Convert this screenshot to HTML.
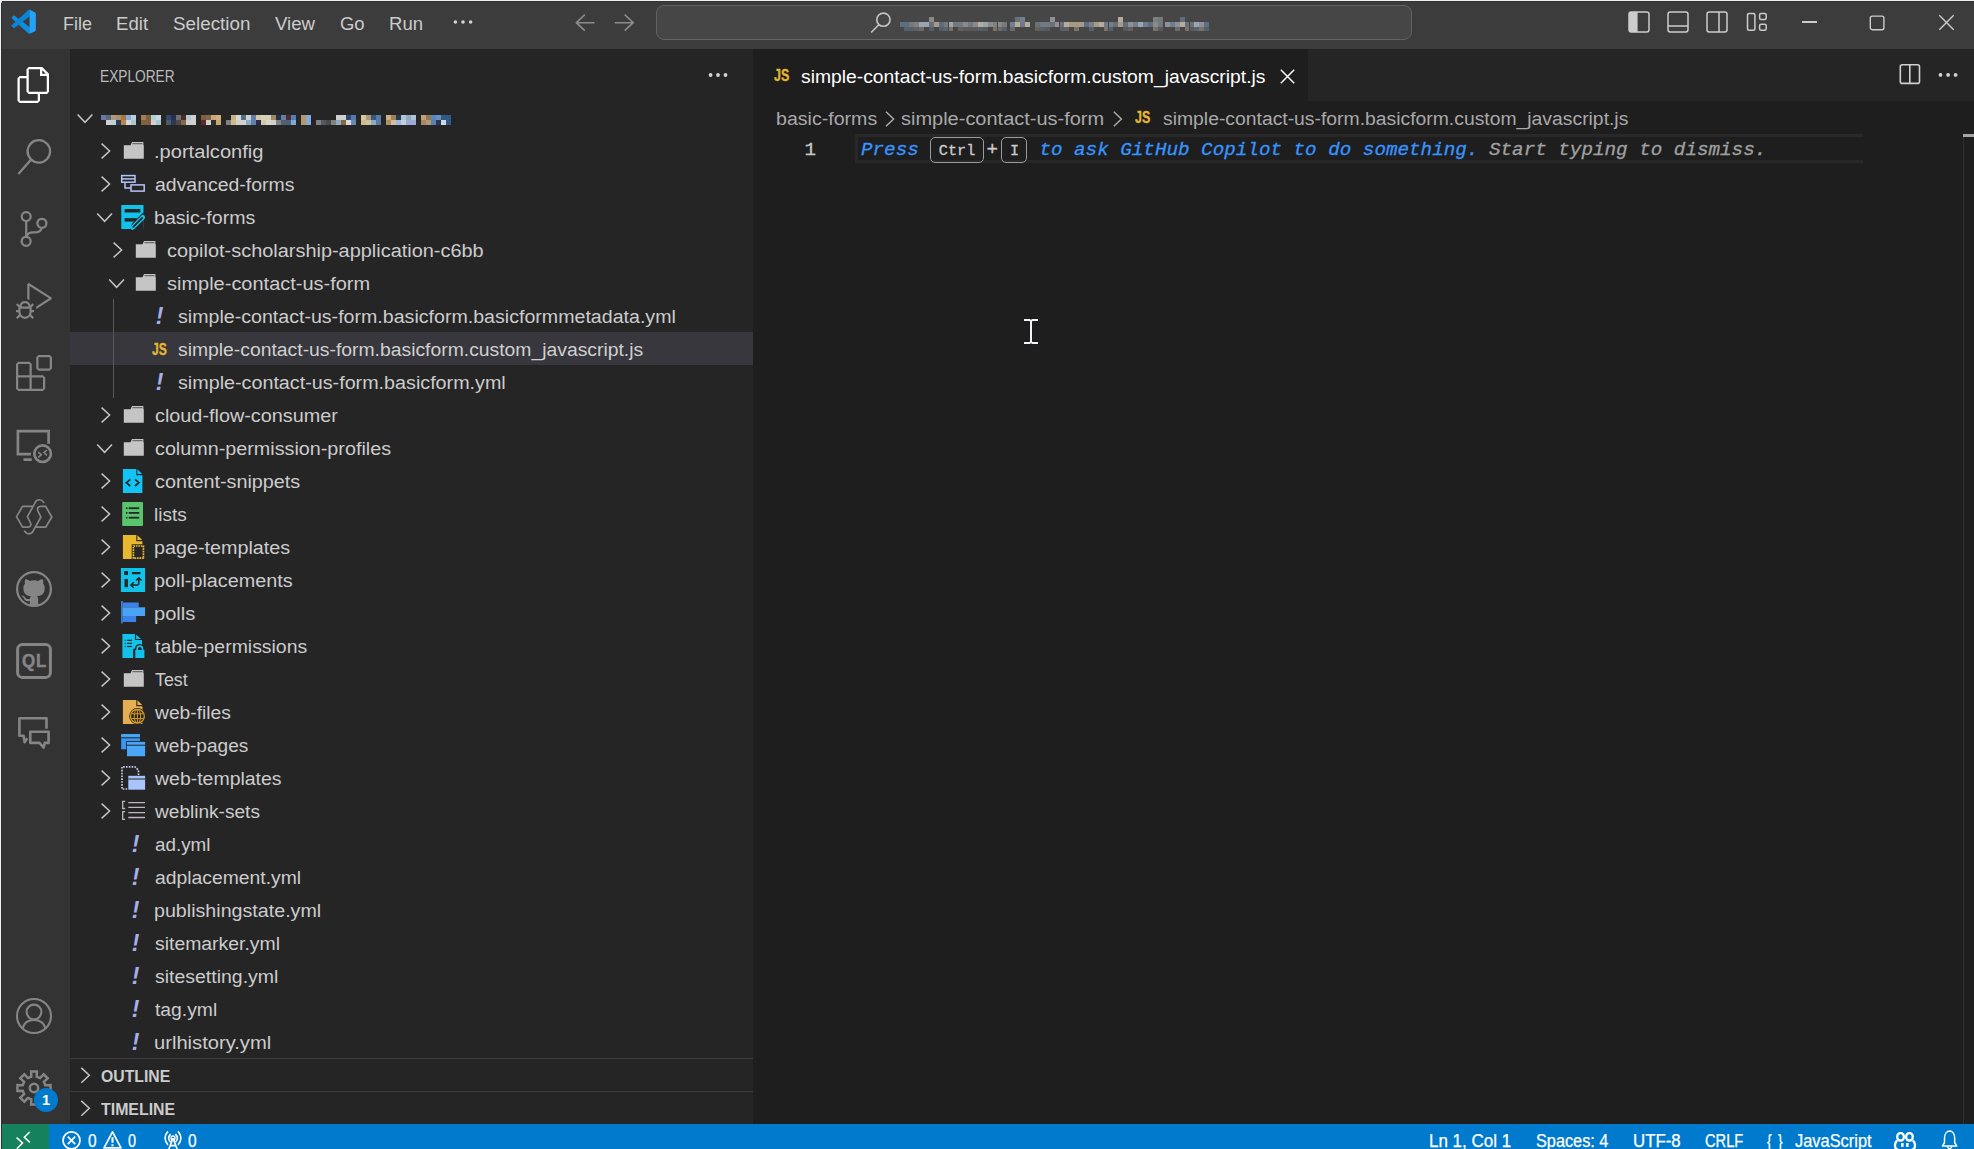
<!DOCTYPE html>
<html lang="en"><head><meta charset="utf-8"><title>Visual Studio Code</title>
<style>
html,body{margin:0;padding:0;background:#1e1e1e;overflow:hidden}
#root{position:relative;width:1974px;height:1149px;overflow:hidden;font-family:'Liberation Sans', sans-serif}
.t{position:absolute;white-space:pre;line-height:30px;height:30px;transform-origin:0 0}
svg{overflow:visible}
</style></head><body><div id="root">
<div style="position:absolute;left:0px;top:0px;width:1974px;height:1149px;background:#1e1e1e;"></div>
<div style="position:absolute;left:0px;top:0px;width:1974px;height:49px;background:#3c3c3c;"></div>
<div style="position:absolute;left:0px;top:49px;width:70px;height:1075px;background:#333333;"></div>
<div style="position:absolute;left:70px;top:49px;width:683px;height:1075px;background:#252526;"></div>
<div style="position:absolute;left:753px;top:49px;width:1221px;height:52px;background:#252526;"></div>
<div style="position:absolute;left:753px;top:49px;width:555px;height:52px;background:#1e1e1e;"></div>
<div style="position:absolute;left:0px;top:1124px;width:1974px;height:25px;background:#007acc;"></div>
<div style="position:absolute;left:0px;top:1124px;width:49px;height:25px;background:#16825d;"></div>
<div style="position:absolute;left:1px;top:1px;width:1974px;height:1px;background:#323232;"></div>
<div style="position:absolute;left:1px;top:1px;width:1px;height:1149px;background:#323232;"></div>
<div style="position:absolute;left:0px;top:0px;width:1974px;height:1px;background:#eff0f4;"></div>
<div style="position:absolute;left:0px;top:0px;width:1px;height:1149px;background:#eff0f4;"></div>
<div style="position:absolute;left:1px;top:1px;width:1px;height:1px;background:#e0e2e8;"></div>
<div style="position:absolute;left:1px;top:2px;width:1px;height:1px;background:#8fa6c0;"></div>
<svg style="position:absolute;left:11px;top:9px" width="26" height="26" viewBox="-2.9167 -3.3333 108.3333 108.3333" ><path fill="#0d8ee0" d="M96.46 10.8 75.86.87a6.23 6.23 0 0 0-7.1 1.21L29.35 38.04 12.19 25.01a4.16 4.16 0 0 0-5.32.24L1.37 30.26a4.17 4.17 0 0 0 0 6.16L16.25 50 1.37 63.58a4.17 4.17 0 0 0 0 6.16l5.5 5.01a4.16 4.16 0 0 0 5.32.24l17.16-13.03 39.41 35.96a6.22 6.22 0 0 0 7.1 1.21l20.6-9.91A6.25 6.25 0 0 0 100 83.59V16.41a6.25 6.25 0 0 0-3.54-5.63zM75.02 72.7 45.11 50l29.91-22.7z"/><path fill="#0a7bcc" d="M1.37 69.74l5.5 5.01a4.16 4.16 0 0 0 5.32.24L75 27.3 75 1 68.76 2.08 1.37 63.58a4.17 4.17 0 0 0 0 6.16z" opacity=".55"/><path fill="#25a2f6" d="M75 .6v98.8c.3-.08.6-.2.86-.33l20.6-9.91A6.25 6.25 0 0 0 100 83.59V16.41a6.25 6.25 0 0 0-3.54-5.63L75.86.87A6 6 0 0 0 75 .6z"/></svg>
<span id="menu0" class="t" style="left:62.58px;top:8.95px;font-size:19.2px;color:#cccccc;font-weight:normal;font-style:normal;font-family:'Liberation Sans', sans-serif;transform:scaleX(0.9362);">File</span>
<span id="menu1" class="t" style="left:116.10px;top:8.95px;font-size:19.2px;color:#cccccc;font-weight:normal;font-style:normal;font-family:'Liberation Sans', sans-serif;transform:scaleX(0.9696);">Edit</span>
<span id="menu2" class="t" style="left:173.00px;top:8.95px;font-size:19.2px;color:#cccccc;font-weight:normal;font-style:normal;font-family:'Liberation Sans', sans-serif;transform:scaleX(0.9804);">Selection</span>
<span id="menu3" class="t" style="left:275.48px;top:8.95px;font-size:19.2px;color:#cccccc;font-weight:normal;font-style:normal;font-family:'Liberation Sans', sans-serif;transform:scaleX(0.9717);">View</span>
<span id="menu4" class="t" style="left:340.00px;top:8.95px;font-size:19.2px;color:#cccccc;font-weight:normal;font-style:normal;font-family:'Liberation Sans', sans-serif;transform:scaleX(0.9623);">Go</span>
<span id="menu5" class="t" style="left:388.58px;top:8.95px;font-size:19.2px;color:#cccccc;font-weight:normal;font-style:normal;font-family:'Liberation Sans', sans-serif;transform:scaleX(0.9655);">Run</span>
<svg style="position:absolute;left:451px;top:18px" width="25" height="9" viewBox="-0.4000 0.0000 25.0000 9.0000" ><circle cx="4.00" cy="4" r="1.8" fill="#d4d4d4"/><circle cx="11.60" cy="4" r="1.8" fill="#d4d4d4"/><circle cx="19.20" cy="4" r="1.8" fill="#d4d4d4"/></svg>
<svg style="position:absolute;left:575px;top:11px" width="21" height="24" viewBox="0.0000 -0.7000 21.0000 24.0000" ><path d="M9.8 3 L1.3 11 L9.8 19 M1.3 11 H19.5" fill="none" stroke="#8c8c8c" stroke-width="1.6"/></svg>
<svg style="position:absolute;left:614px;top:11px" width="22" height="24" viewBox="-0.5000 -0.7000 22.0000 24.0000" ><path d="M10.2 3 L18.7 11 L10.2 19 M18.7 11 H0.3" fill="none" stroke="#8c8c8c" stroke-width="1.6"/></svg>
<div style="position:absolute;left:656px;top:5px;width:756px;height:35px;background:#464646;border:1px solid #626262;border-radius:8px;box-sizing:border-box"></div>
<svg style="position:absolute;left:870px;top:11px" width="23" height="24" viewBox="0.0000 -0.5000 23.0000 24.0000" ><circle cx="13.4" cy="8.2" r="6.6" fill="none" stroke="#c4c4c4" stroke-width="1.6"/><path d="M9 13 L1.2 21" stroke="#c4c4c4" stroke-width="1.6" fill="none"/></svg>
<div style="position:absolute;left:899.5px;top:22.3px;width:4.9px;height:4.9px;background:#5f6d80;"></div>
<div style="position:absolute;left:904.4px;top:22.3px;width:4.9px;height:4.9px;background:#5f6d80;"></div>
<div style="position:absolute;left:904.4px;top:27.2px;width:4.9px;height:3.9px;background:#54606c;"></div>
<div style="position:absolute;left:909.3px;top:22.3px;width:4.9px;height:4.9px;background:#787878;"></div>
<div style="position:absolute;left:909.3px;top:27.2px;width:4.9px;height:3.9px;background:#54606c;"></div>
<div style="position:absolute;left:914.2px;top:22.3px;width:4.9px;height:4.9px;background:#7d7f84;"></div>
<div style="position:absolute;left:914.2px;top:27.2px;width:4.9px;height:3.9px;background:#66605a;"></div>
<div style="position:absolute;left:919.1px;top:22.3px;width:4.9px;height:4.9px;background:#9aa4b0;"></div>
<div style="position:absolute;left:919.1px;top:27.2px;width:4.9px;height:3.9px;background:#6a6a6a;"></div>
<div style="position:absolute;left:924.0px;top:22.3px;width:4.9px;height:4.9px;background:#9aa4b0;"></div>
<div style="position:absolute;left:928.9px;top:22.3px;width:4.9px;height:4.9px;background:#6a7078;"></div>
<div style="position:absolute;left:928.9px;top:27.2px;width:4.9px;height:3.9px;background:#54606c;"></div>
<div style="position:absolute;left:928.9px;top:17.4px;width:4.9px;height:4.9px;background:#8a8a88;"></div>
<div style="position:absolute;left:933.8px;top:22.3px;width:4.9px;height:4.9px;background:#a59a86;"></div>
<div style="position:absolute;left:938.7px;top:22.3px;width:4.9px;height:4.9px;background:#5f6d80;"></div>
<div style="position:absolute;left:938.7px;top:27.2px;width:4.9px;height:3.9px;background:#54606c;"></div>
<div style="position:absolute;left:943.6px;top:22.3px;width:4.9px;height:4.9px;background:#787878;"></div>
<div style="position:absolute;left:943.6px;top:27.2px;width:4.9px;height:3.9px;background:#596472;"></div>
<div style="position:absolute;left:948.5px;top:22.3px;width:4.9px;height:4.9px;background:#9aa4b0;"></div>
<div style="position:absolute;left:948.5px;top:27.2px;width:4.9px;height:3.9px;background:#7a7266;"></div>
<div style="position:absolute;left:953.4px;top:22.3px;width:4.9px;height:4.9px;background:#787878;"></div>
<div style="position:absolute;left:958.3px;top:22.3px;width:4.9px;height:4.9px;background:#707a86;"></div>
<div style="position:absolute;left:958.3px;top:27.2px;width:4.9px;height:3.9px;background:#66605a;"></div>
<div style="position:absolute;left:963.2px;top:22.3px;width:4.9px;height:4.9px;background:#8a8a88;"></div>
<div style="position:absolute;left:963.2px;top:27.2px;width:4.9px;height:3.9px;background:#5a5a5c;"></div>
<div style="position:absolute;left:968.1px;top:22.3px;width:4.9px;height:4.9px;background:#707a86;"></div>
<div style="position:absolute;left:968.1px;top:27.2px;width:4.9px;height:3.9px;background:#5a5a5c;"></div>
<div style="position:absolute;left:973.0px;top:22.3px;width:4.9px;height:4.9px;background:#8a8a88;"></div>
<div style="position:absolute;left:973.0px;top:27.2px;width:4.9px;height:3.9px;background:#5a5a5c;"></div>
<div style="position:absolute;left:977.9px;top:22.3px;width:4.9px;height:4.9px;background:#b5ad9c;"></div>
<div style="position:absolute;left:977.9px;top:27.2px;width:4.9px;height:3.9px;background:#54606c;"></div>
<div style="position:absolute;left:982.8px;top:22.3px;width:4.9px;height:4.9px;background:#9aa4b0;"></div>
<div style="position:absolute;left:982.8px;top:27.2px;width:4.9px;height:3.9px;background:#5a5a5c;"></div>
<div style="position:absolute;left:987.7px;top:22.3px;width:4.9px;height:4.9px;background:#8a8a88;"></div>
<div style="position:absolute;left:992.6px;top:22.3px;width:4.9px;height:4.9px;background:#7d7f84;"></div>
<div style="position:absolute;left:992.6px;top:27.2px;width:4.9px;height:3.9px;background:#7a7266;"></div>
<div style="position:absolute;left:997.5px;top:22.3px;width:4.9px;height:4.9px;background:#8a8a88;"></div>
<div style="position:absolute;left:997.5px;top:27.2px;width:4.9px;height:3.9px;background:#6a6a6a;"></div>
<div style="position:absolute;left:1002.4px;top:22.3px;width:4.9px;height:4.9px;background:#787878;"></div>
<div style="position:absolute;left:1002.4px;top:27.2px;width:4.9px;height:3.9px;background:#54606c;"></div>
<div style="position:absolute;left:1010px;top:22.3px;width:4.9px;height:4.9px;background:#6f7f92;"></div>
<div style="position:absolute;left:1010px;top:27.2px;width:4.9px;height:3.9px;background:#6a6a6a;"></div>
<div style="position:absolute;left:1014.9px;top:22.3px;width:4.9px;height:4.9px;background:#b5ad9c;"></div>
<div style="position:absolute;left:1014.9px;top:17.4px;width:4.9px;height:4.9px;background:#6a7078;"></div>
<div style="position:absolute;left:1019.8px;top:22.3px;width:4.9px;height:4.9px;background:#707a86;"></div>
<div style="position:absolute;left:1019.8px;top:17.4px;width:4.9px;height:4.9px;background:#6f7f92;"></div>
<div style="position:absolute;left:1024.7px;top:22.3px;width:4.9px;height:4.9px;background:#b5ad9c;"></div>
<div style="position:absolute;left:1035px;top:22.3px;width:4.9px;height:4.9px;background:#6a7078;"></div>
<div style="position:absolute;left:1035px;top:27.2px;width:4.9px;height:3.9px;background:#66605a;"></div>
<div style="position:absolute;left:1039.9px;top:22.3px;width:4.9px;height:4.9px;background:#707a86;"></div>
<div style="position:absolute;left:1039.9px;top:27.2px;width:4.9px;height:3.9px;background:#54606c;"></div>
<div style="position:absolute;left:1044.8px;top:22.3px;width:4.9px;height:4.9px;background:#707a86;"></div>
<div style="position:absolute;left:1044.8px;top:27.2px;width:4.9px;height:3.9px;background:#5a5a5c;"></div>
<div style="position:absolute;left:1049.7px;top:22.3px;width:4.9px;height:4.9px;background:#6a7078;"></div>
<div style="position:absolute;left:1049.7px;top:17.4px;width:4.9px;height:4.9px;background:#8f8f95;"></div>
<div style="position:absolute;left:1054.6px;top:22.3px;width:4.9px;height:4.9px;background:#8f8f95;"></div>
<div style="position:absolute;left:1059.5px;top:22.3px;width:4.9px;height:4.9px;background:#6a7078;"></div>
<div style="position:absolute;left:1059.5px;top:27.2px;width:4.9px;height:3.9px;background:#54606c;"></div>
<div style="position:absolute;left:1064.4px;top:22.3px;width:4.9px;height:4.9px;background:#b5ad9c;"></div>
<div style="position:absolute;left:1064.4px;top:27.2px;width:4.9px;height:3.9px;background:#66605a;"></div>
<div style="position:absolute;left:1069.3px;top:22.3px;width:4.9px;height:4.9px;background:#a59a86;"></div>
<div style="position:absolute;left:1074.2px;top:22.3px;width:4.9px;height:4.9px;background:#a59a86;"></div>
<div style="position:absolute;left:1074.2px;top:27.2px;width:4.9px;height:3.9px;background:#7a7266;"></div>
<div style="position:absolute;left:1079.1px;top:22.3px;width:4.9px;height:4.9px;background:#a59a86;"></div>
<div style="position:absolute;left:1084.0px;top:22.3px;width:4.9px;height:4.9px;background:#5f6d80;"></div>
<div style="position:absolute;left:1088.9px;top:22.3px;width:4.9px;height:4.9px;background:#7d7f84;"></div>
<div style="position:absolute;left:1088.9px;top:27.2px;width:4.9px;height:3.9px;background:#54606c;"></div>
<div style="position:absolute;left:1093.8px;top:22.3px;width:4.9px;height:4.9px;background:#a59a86;"></div>
<div style="position:absolute;left:1098.7px;top:22.3px;width:4.9px;height:4.9px;background:#b5ad9c;"></div>
<div style="position:absolute;left:1103.6px;top:22.3px;width:4.9px;height:4.9px;background:#707a86;"></div>
<div style="position:absolute;left:1103.6px;top:27.2px;width:4.9px;height:3.9px;background:#7a7266;"></div>
<div style="position:absolute;left:1108.5px;top:22.3px;width:4.9px;height:4.9px;background:#6f7f92;"></div>
<div style="position:absolute;left:1108.5px;top:27.2px;width:4.9px;height:3.9px;background:#54606c;"></div>
<div style="position:absolute;left:1113.4px;top:22.3px;width:4.9px;height:4.9px;background:#6a7078;"></div>
<div style="position:absolute;left:1118.3px;top:22.3px;width:4.9px;height:4.9px;background:#a59a86;"></div>
<div style="position:absolute;left:1118.3px;top:17.4px;width:4.9px;height:4.9px;background:#b5ad9c;"></div>
<div style="position:absolute;left:1123.2px;top:22.3px;width:4.9px;height:4.9px;background:#5f6d80;"></div>
<div style="position:absolute;left:1123.2px;top:27.2px;width:4.9px;height:3.9px;background:#5a5a5c;"></div>
<div style="position:absolute;left:1128.1px;top:22.3px;width:4.9px;height:4.9px;background:#8f8f95;"></div>
<div style="position:absolute;left:1128.1px;top:27.2px;width:4.9px;height:3.9px;background:#66605a;"></div>
<div style="position:absolute;left:1133.0px;top:22.3px;width:4.9px;height:4.9px;background:#6f7f92;"></div>
<div style="position:absolute;left:1137.9px;top:22.3px;width:4.9px;height:4.9px;background:#9aa4b0;"></div>
<div style="position:absolute;left:1142.8px;top:22.3px;width:4.9px;height:4.9px;background:#6f7f92;"></div>
<div style="position:absolute;left:1148px;top:22.3px;width:4.9px;height:4.9px;background:#5f6d80;"></div>
<div style="position:absolute;left:1152.9px;top:22.3px;width:4.9px;height:4.9px;background:#8a8a88;"></div>
<div style="position:absolute;left:1152.9px;top:27.2px;width:4.9px;height:3.9px;background:#7a7266;"></div>
<div style="position:absolute;left:1152.9px;top:17.4px;width:4.9px;height:4.9px;background:#7d7f84;"></div>
<div style="position:absolute;left:1157.8px;top:22.3px;width:4.9px;height:4.9px;background:#707a86;"></div>
<div style="position:absolute;left:1157.8px;top:27.2px;width:4.9px;height:3.9px;background:#5a5a5c;"></div>
<div style="position:absolute;left:1157.8px;top:17.4px;width:4.9px;height:4.9px;background:#787878;"></div>
<div style="position:absolute;left:1165px;top:22.3px;width:4.9px;height:4.9px;background:#8f8f95;"></div>
<div style="position:absolute;left:1169.9px;top:22.3px;width:4.9px;height:4.9px;background:#6f7f92;"></div>
<div style="position:absolute;left:1174.8px;top:22.3px;width:4.9px;height:4.9px;background:#8f8f95;"></div>
<div style="position:absolute;left:1174.8px;top:27.2px;width:4.9px;height:3.9px;background:#6a6a6a;"></div>
<div style="position:absolute;left:1179.7px;top:22.3px;width:4.9px;height:4.9px;background:#b5ad9c;"></div>
<div style="position:absolute;left:1179.7px;top:17.4px;width:4.9px;height:4.9px;background:#5f6d80;"></div>
<div style="position:absolute;left:1184.6px;top:22.3px;width:4.9px;height:4.9px;background:#6a7078;"></div>
<div style="position:absolute;left:1184.6px;top:27.2px;width:4.9px;height:3.9px;background:#7a7266;"></div>
<div style="position:absolute;left:1189.5px;top:22.3px;width:4.9px;height:4.9px;background:#6a7078;"></div>
<div style="position:absolute;left:1189.5px;top:27.2px;width:4.9px;height:3.9px;background:#5a5a5c;"></div>
<div style="position:absolute;left:1194.4px;top:22.3px;width:4.9px;height:4.9px;background:#9aa4b0;"></div>
<div style="position:absolute;left:1194.4px;top:27.2px;width:4.9px;height:3.9px;background:#596472;"></div>
<div style="position:absolute;left:1199.3px;top:22.3px;width:4.9px;height:4.9px;background:#8f8f95;"></div>
<div style="position:absolute;left:1199.3px;top:27.2px;width:4.9px;height:3.9px;background:#7a7266;"></div>
<div style="position:absolute;left:1204.2px;top:22.3px;width:4.9px;height:4.9px;background:#5f6d80;"></div>
<div style="position:absolute;left:1204.2px;top:27.2px;width:4.9px;height:3.9px;background:#54606c;"></div>
<svg style="position:absolute;left:1628px;top:11px" width="23" height="23" viewBox="0.0000 0.0000 23.0000 23.0000" ><rect x="1" y="1" width="20" height="20" rx="2.2" fill="none" stroke="#cccccc" stroke-width="1.5"/><path d="M1 3 a2 2 0 0 1 2 -2 H9.6 V21 H3 a2 2 0 0 1 -2 -2 Z" fill="#cccccc"/></svg>
<svg style="position:absolute;left:1667px;top:11px" width="23" height="23" viewBox="0.0000 0.0000 23.0000 23.0000" ><rect x="1" y="1" width="20" height="20" rx="2.2" fill="none" stroke="#cccccc" stroke-width="1.5"/><path d="M1 15 H21" stroke="#cccccc" stroke-width="1.5"/></svg>
<svg style="position:absolute;left:1706px;top:11px" width="23" height="23" viewBox="0.0000 0.0000 23.0000 23.0000" ><rect x="1" y="1" width="20" height="20" rx="2.2" fill="none" stroke="#cccccc" stroke-width="1.5"/><path d="M13 1 V21" stroke="#cccccc" stroke-width="1.5"/></svg>
<svg style="position:absolute;left:1746px;top:12px" width="23" height="21" viewBox="0.0000 0.0000 23.0000 21.0000" ><rect x="1.5" y="1.5" width="7.4" height="16.8" rx="1.5" fill="none" stroke="#cccccc" stroke-width="1.5"/><rect x="13.6" y="1.5" width="6.6" height="6" rx="1.5" fill="none" stroke="#cccccc" stroke-width="1.5"/><rect x="13.6" y="12.3" width="6.6" height="6" rx="1.5" fill="none" stroke="#cccccc" stroke-width="1.5"/></svg>
<div style="position:absolute;left:1802px;top:21.3px;width:15px;height:1.3px;background:#cccccc;"></div>
<svg style="position:absolute;left:1869px;top:15px" width="17" height="17" viewBox="0.0000 0.0000 17.0000 17.0000" ><rect x="1.3" y="1.1" width="13.6" height="13.6" rx="2" fill="none" stroke="#cccccc" stroke-width="1.4"/></svg>
<svg style="position:absolute;left:1939px;top:15px" width="16" height="16" viewBox="0.0000 0.0000 16.0000 16.0000" ><path d="M0.3 0.3 L14.7 14.7 M14.7 0.3 L0.3 14.7" stroke="#cccccc" stroke-width="1.4" fill="none"/></svg>
<svg style="position:absolute;left:16px;top:67px" width="37" height="37" viewBox="0.0000 0.0000 24.6667 24.6667" ><path fill="#ffffff" d="M17.5 0h-9L7 1.5V6H2.5L1 7.5v15.07L2.5 24h12.07L16 22.57V18h4.7l1.3-1.43V4.5L17.5 0zm0 2.12l2.38 2.38H17.5V2.12zm-3 20.38h-12v-15H7v9.07L8.5 18h6v4.5zm6-6h-12v-15H16V6h4.5v10.5z"/></svg>
<svg style="position:absolute;left:16px;top:139px" width="37" height="37" viewBox="0.0000 0.0000 24.6667 24.6667" ><path fill="#858585" d="M15.25 0a8.25 8.25 0 0 0-6.18 13.72L1 22.88l1.12 1 8.05-9.12A8.251 8.251 0 1 0 15.25.01V0zm0 15a6.75 6.75 0 1 1 0-13.5 6.75 6.75 0 0 1 0 13.5z"/></svg>
<svg style="position:absolute;left:16px;top:211px" width="37" height="37" viewBox="0.0000 0.0000 24.6667 24.6667" ><path fill="#858585" d="M21.007 8.222A3.738 3.738 0 0 0 15.045 5.2a3.737 3.737 0 0 0 1.156 6.583 2.988 2.988 0 0 1-2.668 1.67h-2.99a4.456 4.456 0 0 0-2.989 1.165V7.4a3.737 3.737 0 1 0-1.494 0v9.117a3.776 3.776 0 1 0 1.816.099 2.99 2.99 0 0 1 2.668-1.667h2.99a4.484 4.484 0 0 0 4.223-3.039 3.736 3.736 0 0 0 3.25-3.687zM4.565 3.738a2.242 2.242 0 1 1 4.484 0 2.242 2.242 0 0 1-4.484 0zm4.484 16.441a2.242 2.242 0 1 1-4.484 0 2.242 2.242 0 0 1 4.484 0zm8.221-9.715a2.242 2.242 0 1 1 0-4.485 2.242 2.242 0 0 1 0 4.485z"/></svg>
<svg style="position:absolute;left:16px;top:283px" width="37" height="37" viewBox="0.0000 0.0000 24.6667 24.6667" ><path fill="#858585" d="M10.94 13.5l-1.32 1.32a3.73 3.73 0 0 0-7.24 0L1.06 13.5 0 14.56l1.72 1.72-.22.22V18H0v1.5h1.5v.08c.077.489.214.966.41 1.42L0 22.94 1.06 24l1.65-1.65A4.308 4.308 0 0 0 6 24a4.31 4.31 0 0 0 3.29-1.65L10.94 24 12 22.94 10.09 21c.198-.464.336-.951.41-1.45v-.1H12V18h-1.5v-1.5l-.22-.22L12 14.56l-1.06-1.06zM6 13.5a2.25 2.25 0 0 1 2.25 2.25h-4.5A2.25 2.25 0 0 1 6 13.5zm3 6a3.33 3.33 0 0 1-3 3 3.33 3.33 0 0 1-3-3v-2.25h6v2.25zm14.76-9.9v1.26L13.5 17.37V15.6l8.5-5.37L9 2v9.46a5.07 5.07 0 0 0-1.5-.72V.63L8.64 0l15.12 9.6z"/></svg>
<svg style="position:absolute;left:16px;top:355px" width="37" height="37" viewBox="0.0000 0.0000 24.6667 24.6667" ><path fill="#858585" d="M13.5 1.5L15 0h7.5L24 1.5V9l-1.5 1.5H15L13.5 9V1.5zm1.5 0V9h7.5V1.5H15zM0 15V6l1.5-1.5H9L10.5 6v7.5H18l1.5 1.5v7.5L18 24H1.5L0 22.5V15zm9-1.5V6H1.5v7.5H9zM9 15H1.5v7.5H9V15zm1.5 7.5H18V15h-7.5v7.5z"/></svg>
<svg style="position:absolute;left:16px;top:427px" width="37" height="37" viewBox="0.0000 0.0000 37.0000 37.0000" ><path d="M15.800 32.600 H7.500 M15 27.200 H1.900 V4.200 H32.600 V16.700" fill="none" stroke="#858585" stroke-width="2.700"/><circle cx="26.600" cy="26.700" r="8.300" fill="none" stroke="#858585" stroke-width="2.700"/><path d="M22.300 25.200 L25.300 27.800 L22.300 30.400 M31 23 L27.900 25.600 L31 28.300" fill="none" stroke="#858585" stroke-width="1.600"/></svg>
<svg style="position:absolute;left:16px;top:499px" width="37" height="37" viewBox="0.0000 0.0000 37.0000 37.0000" ><g fill="none" stroke="#858585" stroke-width="1.7" stroke-linejoin="round" stroke-linecap="round"><path d="M27.7 3.4 C25.5 0 20.5 -0.5 18.8 4.3 L11.4 17.6 L14.3 23.5 C15.8 26.5 14 28.2 11.4 28.2 H6.6 L0.5 17.6 L6.6 7.4 H17.1"/><path d="M8.6 32.2 C10.8 35.6 15.8 36.1 17.5 31.3 L24.9 18 L22 12.1 C20.5 9.1 22.3 7.4 24.9 7.4 H29.7 L35.8 18 L29.7 28.2 H19.2"/></g></svg>
<svg style="position:absolute;left:16px;top:571px" width="37" height="37" viewBox="0.0000 0.0000 16.4444 16.4444" ><circle cx="8" cy="8" r="7.6" fill="#858585"/><path fill="#333333" transform="translate(8 8) scale(0.93) translate(-8 -8)" d="M8 0C3.58 0 0 3.58 0 8c0 3.54 2.29 6.53 5.47 7.59.4.07.55-.17.55-.38 0-.19-.01-.82-.01-1.49-2.01.37-2.53-.49-2.69-.94-.09-.23-.48-.94-.82-1.13-.28-.15-.68-.52-.01-.53.63-.01 1.08.58 1.23.82.72 1.21 1.87.87 2.33.66.07-.52.28-.87.51-1.07-1.78-.2-3.64-.89-3.64-3.950 0-.87.31-1.59.82-2.15-.08-.2-.36-1.02.08-2.12 0 0 .67-.21 2.2.82.64-.18 1.32-.27 2-.27.68 0 1.36.09 2 .27 1.53-1.04 2.2-.82 2.2-.82.44 1.1.16 1.92.08 2.12.51.56.82 1.27.82 2.15 0 3.07-1.87 3.750-3.650 3.950.29.25.54.73.54 1.48 0 1.07-.01 1.93-.01 2.2 0 .21.15.46.55.38A8.013 8.013 0 0016 8c0-4.42-3.58-8-8-8z"/><circle cx="8" cy="8" r="7.5" fill="none" stroke="#858585" stroke-width="1"/></svg>
<svg style="position:absolute;left:16px;top:643px" width="37" height="37" viewBox="0.0000 0.0000 37.0000 37.0000" ><rect x="1.600" y="1.600" width="32.800" height="32.800" rx="4.600" fill="none" stroke="#858585" stroke-width="3"/></svg>
<span class="t" style="left:21.500px;top:646.300px;font-size:19px;font-weight:bold;color:#858585;letter-spacing:0.900px;-webkit-text-stroke:0.500px #858585;transform:scaleX(0.890)">QL</span>
<svg style="position:absolute;left:16px;top:715px" width="37" height="37" viewBox="0.0000 0.0000 37.0000 37.0000" ><g fill="none" stroke="#858585" stroke-width="2.600" stroke-linejoin="round"><path d="M30.500 13.700 V3.200 H3.400 V20.800 H7.600 L8.600 27.300 L11.300 23.200"/><path d="M14.300 16.800 H32.600 V27.900 H28.800 L27.600 32.600 L23.500 27.900 H14.300 Z"/></g></svg>
<svg style="position:absolute;left:16px;top:998px" width="37" height="37" viewBox="0.0000 0.0000 37.0000 37.0000" ><circle cx="18" cy="18" r="17" fill="none" stroke="#858585" stroke-width="2.100"/><circle cx="18" cy="14" r="7.400" fill="none" stroke="#858585" stroke-width="2.100"/><path d="M6.500 30.500 C8 24.500 13 22 18 22 C23 22 28 24.500 29.500 30.500" fill="none" stroke="#858585" stroke-width="2.100"/></svg>
<svg style="position:absolute;left:16px;top:1070px" width="37" height="37" viewBox="0.0000 0.0000 37.0000 37.0000" ><path d="M15.11 1.45 L20.89 1.45 L20.71 6.72 L24.06 8.11 L27.66 4.26 L31.74 8.34 L27.89 11.94 L29.28 15.29 L34.55 15.11 L34.55 20.89 L29.28 20.71 L27.89 24.06 L31.74 27.66 L27.66 31.74 L24.06 27.89 L20.71 29.28 L20.89 34.55 L15.11 34.55 L15.29 29.28 L11.94 27.89 L8.34 31.74 L4.26 27.66 L8.11 24.06 L6.72 20.71 L1.45 20.89 L1.45 15.11 L6.72 15.29 L8.11 11.94 L4.26 8.34 L8.34 4.26 L11.94 8.11 L15.29 6.72 Z" fill="none" stroke="#858585" stroke-width="2.500" stroke-linejoin="miter"/><circle cx="18" cy="18" r="4.200" fill="none" stroke="#858585" stroke-width="2.500"/></svg>
<div style="position:absolute;left:34px;top:1088px;width:24px;height:24px;background:#007acc;border-radius:50%"></div>
<span class="t" style="left:34px;top:1085px;width:24px;text-align:center;font-size:14.500px;font-weight:bold;color:#fff">1</span>
<span id="explorer" class="t" style="left:100.02px;top:60.98px;font-size:16.5px;color:#bbbbbb;font-weight:normal;font-style:normal;font-family:'Liberation Sans', sans-serif;transform:scaleX(0.8306);">EXPLORER</span>
<svg style="position:absolute;left:706px;top:71px" width="25" height="9" viewBox="-0.6000 0.0000 25.0000 9.0000" ><circle cx="4.00" cy="4" r="1.9" fill="#d4d4d4"/><circle cx="11.40" cy="4" r="1.9" fill="#d4d4d4"/><circle cx="18.90" cy="4" r="1.9" fill="#d4d4d4"/></svg>
<div style="position:absolute;left:70px;top:332px;width:683px;height:33px;background:#37373d;"></div>
<div style="position:absolute;left:112.5px;top:299px;width:1px;height:99px;background:#585858;"></div>
<svg style="position:absolute;left:76px;top:112px" width="19" height="14" viewBox="0.0000 -0.5000 19.0000 14.0000" ><path d="M1.6 2 L9 9.800 L16.400 2" fill="none" stroke="#c5c5c5" stroke-width="1.5"/></svg>
<div style="position:absolute;left:100.6px;top:115px;width:5.01px;height:5px;background:#6a78a8;"></div>
<div style="position:absolute;left:105.61px;top:115px;width:5.01px;height:5px;background:#5a6a80;"></div>
<div style="position:absolute;left:110.62px;top:115px;width:5.01px;height:5px;background:#b09878;"></div>
<div style="position:absolute;left:115.63px;top:115px;width:5.01px;height:5px;background:#a89070;"></div>
<div style="position:absolute;left:120.64px;top:115px;width:5.01px;height:5px;background:#a07840;"></div>
<div style="position:absolute;left:125.65px;top:115px;width:5.01px;height:5px;background:#88a8d8;"></div>
<div style="position:absolute;left:130.66px;top:115px;width:5.01px;height:5px;background:#b8d0d8;"></div>
<div style="position:absolute;left:140.68px;top:115px;width:5.01px;height:5px;background:#a08050;"></div>
<div style="position:absolute;left:145.69px;top:115px;width:5.01px;height:5px;background:#806040;"></div>
<div style="position:absolute;left:150.7px;top:115px;width:5.01px;height:5px;background:#b0d0d8;"></div>
<div style="position:absolute;left:155.71px;top:115px;width:5.01px;height:5px;background:#c8d8e0;"></div>
<div style="position:absolute;left:165.73px;top:115px;width:5.01px;height:5px;background:#304870;"></div>
<div style="position:absolute;left:170.74px;top:115px;width:5.01px;height:5px;background:#283050;"></div>
<div style="position:absolute;left:175.75px;top:115px;width:5.01px;height:5px;background:#707070;"></div>
<div style="position:absolute;left:180.76px;top:115px;width:5.01px;height:5px;background:#502828;"></div>
<div style="position:absolute;left:185.77px;top:115px;width:5.01px;height:5px;background:#b0c8d0;"></div>
<div style="position:absolute;left:190.78px;top:115px;width:5.01px;height:5px;background:#d0d0d0;"></div>
<div style="position:absolute;left:200.8px;top:115px;width:5.01px;height:5px;background:#786040;"></div>
<div style="position:absolute;left:205.81px;top:115px;width:5.01px;height:5px;background:#806848;"></div>
<div style="position:absolute;left:210.82px;top:115px;width:5.01px;height:5px;background:#c8a870;"></div>
<div style="position:absolute;left:215.83px;top:115px;width:5.01px;height:5px;background:#d0b080;"></div>
<div style="position:absolute;left:230.86px;top:115px;width:5.01px;height:5px;background:#c8b088;"></div>
<div style="position:absolute;left:235.87px;top:115px;width:5.01px;height:5px;background:#d8d8d0;"></div>
<div style="position:absolute;left:240.88px;top:115px;width:5.01px;height:5px;background:#507088;"></div>
<div style="position:absolute;left:245.89px;top:115px;width:5.01px;height:5px;background:#d0d0d0;"></div>
<div style="position:absolute;left:250.9px;top:115px;width:5.01px;height:5px;background:#6080a8;"></div>
<div style="position:absolute;left:255.91px;top:115px;width:5.01px;height:5px;background:#d0c8a0;"></div>
<div style="position:absolute;left:260.92px;top:115px;width:5.01px;height:5px;background:#d8d0b0;"></div>
<div style="position:absolute;left:265.93px;top:115px;width:5.01px;height:5px;background:#d0d0c0;"></div>
<div style="position:absolute;left:270.94px;top:115px;width:5.01px;height:5px;background:#a08860;"></div>
<div style="position:absolute;left:275.95px;top:115px;width:5.01px;height:5px;background:#283048;"></div>
<div style="position:absolute;left:280.96px;top:115px;width:5.01px;height:5px;background:#6080a8;"></div>
<div style="position:absolute;left:285.97px;top:115px;width:5.01px;height:5px;background:#502828;"></div>
<div style="position:absolute;left:290.98px;top:115px;width:5.01px;height:5px;background:#5080b8;"></div>
<div style="position:absolute;left:301.0px;top:115px;width:5.01px;height:5px;background:#b09870;"></div>
<div style="position:absolute;left:306.01px;top:115px;width:5.01px;height:5px;background:#88a8d8;"></div>
<div style="position:absolute;left:336.07px;top:115px;width:5.01px;height:5px;background:#d0d0d0;"></div>
<div style="position:absolute;left:341.08px;top:115px;width:5.01px;height:5px;background:#d0d0d0;"></div>
<div style="position:absolute;left:346.09px;top:115px;width:5.01px;height:5px;background:#304878;"></div>
<div style="position:absolute;left:351.1px;top:115px;width:5.01px;height:5px;background:#5878b0;"></div>
<div style="position:absolute;left:361.12px;top:115px;width:5.01px;height:5px;background:#d0c8a0;"></div>
<div style="position:absolute;left:366.13px;top:115px;width:5.01px;height:5px;background:#b09870;"></div>
<div style="position:absolute;left:371.14px;top:115px;width:5.01px;height:5px;background:#305888;"></div>
<div style="position:absolute;left:376.15px;top:115px;width:5.01px;height:5px;background:#5878a8;"></div>
<div style="position:absolute;left:386.17px;top:115px;width:5.01px;height:5px;background:#c8b088;"></div>
<div style="position:absolute;left:391.18px;top:115px;width:5.01px;height:5px;background:#a08050;"></div>
<div style="position:absolute;left:396.19px;top:115px;width:5.01px;height:5px;background:#283850;"></div>
<div style="position:absolute;left:401.2px;top:115px;width:5.01px;height:5px;background:#a8c8d0;"></div>
<div style="position:absolute;left:406.21px;top:115px;width:5.01px;height:5px;background:#90a8c0;"></div>
<div style="position:absolute;left:411.22px;top:115px;width:5.01px;height:5px;background:#a8c8d0;"></div>
<div style="position:absolute;left:421.24px;top:115px;width:5.01px;height:5px;background:#c0a070;"></div>
<div style="position:absolute;left:426.25px;top:115px;width:5.01px;height:5px;background:#907850;"></div>
<div style="position:absolute;left:431.26px;top:115px;width:5.01px;height:5px;background:#5888c0;"></div>
<div style="position:absolute;left:436.27px;top:115px;width:5.01px;height:5px;background:#6890c0;"></div>
<div style="position:absolute;left:441.28px;top:115px;width:5.01px;height:5px;background:#305888;"></div>
<div style="position:absolute;left:446.29px;top:115px;width:5.01px;height:5px;background:#305888;"></div>
<div style="position:absolute;left:105.61px;top:120px;width:5.01px;height:5px;background:#d0d0d0;"></div>
<div style="position:absolute;left:110.62px;top:120px;width:5.01px;height:5px;background:#b8d0d8;"></div>
<div style="position:absolute;left:115.63px;top:120px;width:5.01px;height:5px;background:#303a50;"></div>
<div style="position:absolute;left:120.64px;top:120px;width:5.01px;height:5px;background:#b08850;"></div>
<div style="position:absolute;left:125.65px;top:120px;width:5.01px;height:5px;background:#d8d8d8;"></div>
<div style="position:absolute;left:130.66px;top:120px;width:5.01px;height:5px;background:#a8c8d0;"></div>
<div style="position:absolute;left:140.68px;top:120px;width:5.01px;height:5px;background:#806040;"></div>
<div style="position:absolute;left:145.69px;top:120px;width:5.01px;height:5px;background:#806040;"></div>
<div style="position:absolute;left:150.7px;top:120px;width:5.01px;height:5px;background:#d0d0d0;"></div>
<div style="position:absolute;left:155.71px;top:120px;width:5.01px;height:5px;background:#a8c8d0;"></div>
<div style="position:absolute;left:165.73px;top:120px;width:5.01px;height:5px;background:#505868;"></div>
<div style="position:absolute;left:170.74px;top:120px;width:5.01px;height:5px;background:#303850;"></div>
<div style="position:absolute;left:175.75px;top:120px;width:5.01px;height:5px;background:#504848;"></div>
<div style="position:absolute;left:180.76px;top:120px;width:5.01px;height:5px;background:#806848;"></div>
<div style="position:absolute;left:185.77px;top:120px;width:5.01px;height:5px;background:#d0d0d0;"></div>
<div style="position:absolute;left:190.78px;top:120px;width:5.01px;height:5px;background:#d0d0d0;"></div>
<div style="position:absolute;left:200.8px;top:120px;width:5.01px;height:5px;background:#602828;"></div>
<div style="position:absolute;left:205.81px;top:120px;width:5.01px;height:5px;background:#d0d0d0;"></div>
<div style="position:absolute;left:210.82px;top:120px;width:5.01px;height:5px;background:#303030;"></div>
<div style="position:absolute;left:215.83px;top:120px;width:5.01px;height:5px;background:#c8a870;"></div>
<div style="position:absolute;left:225.85px;top:120px;width:5.01px;height:5px;background:#808080;"></div>
<div style="position:absolute;left:230.86px;top:120px;width:5.01px;height:5px;background:#d0b888;"></div>
<div style="position:absolute;left:235.87px;top:120px;width:5.01px;height:5px;background:#d0d0d0;"></div>
<div style="position:absolute;left:240.88px;top:120px;width:5.01px;height:5px;background:#d0d0d0;"></div>
<div style="position:absolute;left:245.89px;top:120px;width:5.01px;height:5px;background:#90a8c0;"></div>
<div style="position:absolute;left:250.9px;top:120px;width:5.01px;height:5px;background:#6080a8;"></div>
<div style="position:absolute;left:255.91px;top:120px;width:5.01px;height:5px;background:#282848;"></div>
<div style="position:absolute;left:260.92px;top:120px;width:5.01px;height:5px;background:#d0c8a8;"></div>
<div style="position:absolute;left:265.93px;top:120px;width:5.01px;height:5px;background:#d8d8c8;"></div>
<div style="position:absolute;left:270.94px;top:120px;width:5.01px;height:5px;background:#d0d0d0;"></div>
<div style="position:absolute;left:275.95px;top:120px;width:5.01px;height:5px;background:#808080;"></div>
<div style="position:absolute;left:280.96px;top:120px;width:5.01px;height:5px;background:#506070;"></div>
<div style="position:absolute;left:285.97px;top:120px;width:5.01px;height:5px;background:#486080;"></div>
<div style="position:absolute;left:290.98px;top:120px;width:5.01px;height:5px;background:#80a8d0;"></div>
<div style="position:absolute;left:301.0px;top:120px;width:5.01px;height:5px;background:#b09870;"></div>
<div style="position:absolute;left:306.01px;top:120px;width:5.01px;height:5px;background:#88a8d8;"></div>
<div style="position:absolute;left:316.03px;top:120px;width:5.01px;height:5px;background:#808080;"></div>
<div style="position:absolute;left:321.04px;top:120px;width:5.01px;height:5px;background:#505860;"></div>
<div style="position:absolute;left:326.05px;top:120px;width:5.01px;height:5px;background:#484848;"></div>
<div style="position:absolute;left:331.06px;top:120px;width:5.01px;height:5px;background:#808080;"></div>
<div style="position:absolute;left:336.07px;top:120px;width:5.01px;height:5px;background:#90a8c0;"></div>
<div style="position:absolute;left:341.08px;top:120px;width:5.01px;height:5px;background:#806840;"></div>
<div style="position:absolute;left:346.09px;top:120px;width:5.01px;height:5px;background:#d8d8d8;"></div>
<div style="position:absolute;left:351.1px;top:120px;width:5.01px;height:5px;background:#6888b0;"></div>
<div style="position:absolute;left:361.12px;top:120px;width:5.01px;height:5px;background:#d0b888;"></div>
<div style="position:absolute;left:366.13px;top:120px;width:5.01px;height:5px;background:#d0c0a0;"></div>
<div style="position:absolute;left:371.14px;top:120px;width:5.01px;height:5px;background:#90a8c0;"></div>
<div style="position:absolute;left:376.15px;top:120px;width:5.01px;height:5px;background:#5878a8;"></div>
<div style="position:absolute;left:386.17px;top:120px;width:5.01px;height:5px;background:#b09060;"></div>
<div style="position:absolute;left:391.18px;top:120px;width:5.01px;height:5px;background:#d0c0a0;"></div>
<div style="position:absolute;left:396.19px;top:120px;width:5.01px;height:5px;background:#a0b8e0;"></div>
<div style="position:absolute;left:401.2px;top:120px;width:5.01px;height:5px;background:#c0d0e0;"></div>
<div style="position:absolute;left:406.21px;top:120px;width:5.01px;height:5px;background:#a0a8d8;"></div>
<div style="position:absolute;left:411.22px;top:120px;width:5.01px;height:5px;background:#a0a8d8;"></div>
<div style="position:absolute;left:421.24px;top:120px;width:5.01px;height:5px;background:#a88860;"></div>
<div style="position:absolute;left:426.25px;top:120px;width:5.01px;height:5px;background:#b09878;"></div>
<div style="position:absolute;left:431.26px;top:120px;width:5.01px;height:5px;background:#6080a8;"></div>
<div style="position:absolute;left:436.27px;top:120px;width:5.01px;height:5px;background:#283858;"></div>
<div style="position:absolute;left:441.28px;top:120px;width:5.01px;height:5px;background:#d0d8e0;"></div>
<div style="position:absolute;left:446.29px;top:120px;width:5.01px;height:5px;background:#305888;"></div>
<svg style="position:absolute;left:99px;top:142px" width="14" height="19" viewBox="-0.6000 0.0000 14.0000 19.0000" ><path d="M2 1.6 L10 9 L2 16.400" fill="none" stroke="#c5c5c5" stroke-width="1.5"/></svg>
<svg style="position:absolute;left:121px;top:139px" width="26" height="25" viewBox="-0.5000 0.0000 26.0000 25.0000" ><path fill="#c5c5c5" d="M2.300 6.300 H9 L10.500 3 H21.900 V6.300 H22.300 V19.700 H2.300 Z"/><path d="M10.900 4.700 H21.100" stroke="#3a3a3a" stroke-width="0.8"/></svg>
<span id="row1" class="t" style="left:153.60px;top:137.15px;font-size:19.2px;color:#cccccc;font-weight:normal;font-style:normal;font-family:'Liberation Sans', sans-serif;transform:scaleX(1.0471);">.portalconfig</span>
<svg style="position:absolute;left:99px;top:175px" width="14" height="19" viewBox="-0.6000 0.0000 14.0000 19.0000" ><path d="M2 1.6 L10 9 L2 16.400" fill="none" stroke="#c5c5c5" stroke-width="1.5"/></svg>
<svg style="position:absolute;left:121px;top:172px" width="26" height="25" viewBox="-0.5000 0.0000 26.0000 25.0000" ><g fill="none" stroke="#b4c3fb" stroke-width="1.500"><rect x="0.200" y="3.600" width="13.300" height="6.600"/><path d="M0.200 6.900 H13.500"/><rect x="9.500" y="12.900" width="13.200" height="6.200"/><path d="M3.500 10.200 V16 H9.500"/></g></svg>
<span id="row2" class="t" style="left:154.50px;top:170.15px;font-size:19.2px;color:#cccccc;font-weight:normal;font-style:normal;font-family:'Liberation Sans', sans-serif;transform:scaleX(1.0136);">advanced-forms</span>
<svg style="position:absolute;left:95px;top:211px" width="20" height="14" viewBox="-0.6000 -0.5000 20.0000 14.0000" ><path d="M1.6 2 L9 9.800 L16.400 2" fill="none" stroke="#c5c5c5" stroke-width="1.5"/></svg>
<svg style="position:absolute;left:121px;top:205px" width="26" height="25" viewBox="-0.5000 0.0000 26.0000 25.0000" ><rect x="-0.200" y="0" width="22.200" height="24" fill="#11c3eb"/><rect x="3.100" y="4" width="15.700" height="3.500" fill="#262626"/><rect x="3.100" y="13.100" width="12.200" height="3.500" fill="#262626"/><path d="M9 24 L10.500 18.500 L22.100 7 L22.100 24 Z" fill="#262626"/><path d="M11.200 22.500 L21.300 12.300" stroke="#11c3eb" stroke-width="4.600" stroke-linecap="round"/><path d="M11.800 21.900 L20.700 12.900" stroke="#262626" stroke-width="1.800" stroke-linecap="round"/></svg>
<span id="row3" class="t" style="left:153.60px;top:203.15px;font-size:19.2px;color:#cccccc;font-weight:normal;font-style:normal;font-family:'Liberation Sans', sans-serif;transform:scaleX(1.0219);">basic-forms</span>
<svg style="position:absolute;left:111px;top:241px" width="14" height="19" viewBox="-0.6000 0.0000 14.0000 19.0000" ><path d="M2 1.6 L10 9 L2 16.400" fill="none" stroke="#c5c5c5" stroke-width="1.5"/></svg>
<svg style="position:absolute;left:133px;top:238px" width="26" height="25" viewBox="-0.5000 0.0000 26.0000 25.0000" ><path fill="#c5c5c5" d="M2.300 6.300 H9 L10.500 3 H21.900 V6.300 H22.300 V19.700 H2.300 Z"/><path d="M10.900 4.700 H21.100" stroke="#3a3a3a" stroke-width="0.8"/></svg>
<span id="row4" class="t" style="left:166.50px;top:236.15px;font-size:19.2px;color:#cccccc;font-weight:normal;font-style:normal;font-family:'Liberation Sans', sans-serif;transform:scaleX(1.0381);">copilot-scholarship-application-c6bb</span>
<svg style="position:absolute;left:107px;top:277px" width="20" height="14" viewBox="-0.6000 -0.5000 20.0000 14.0000" ><path d="M1.6 2 L9 9.800 L16.400 2" fill="none" stroke="#c5c5c5" stroke-width="1.5"/></svg>
<svg style="position:absolute;left:133px;top:271px" width="26" height="25" viewBox="-0.5000 0.0000 26.0000 25.0000" ><path fill="#c5c5c5" d="M2.300 6.300 H9 L10.500 3 H21.900 V6.300 H22.300 V19.700 H2.300 Z"/><path d="M10.900 4.700 H21.100" stroke="#3a3a3a" stroke-width="0.8"/></svg>
<span id="row5" class="t" style="left:166.50px;top:269.15px;font-size:19.2px;color:#cccccc;font-weight:normal;font-style:normal;font-family:'Liberation Sans', sans-serif;transform:scaleX(1.0412);">simple-contact-us-form</span>
<span id="y6" class="t" style="left:153.5px;top:301.2px;width:12px;text-align:center;font-size:23px;font-style:italic;font-weight:bold;color:#a5afe8">!</span>
<span id="row6" class="t" style="left:178.48px;top:302.15px;font-size:19.2px;color:#cccccc;font-weight:normal;font-style:normal;font-family:'Liberation Sans', sans-serif;transform:scaleX(1.0217);">simple-contact-us-form.basicform.basicformmetadata.yml</span>
<span id="js7" class="t" style="left:152.02px;top:334.86px;font-size:16px;color:#e5b733;font-weight:bold;font-style:normal;font-family:'Liberation Sans', sans-serif;transform:scaleX(0.7565);-webkit-text-stroke:0.350px #e5b733;">JS</span>
<span id="row7" class="t" style="left:178.48px;top:335.15px;font-size:19.2px;color:#d0d0d0;font-weight:normal;font-style:normal;font-family:'Liberation Sans', sans-serif;transform:scaleX(1.0076);">simple-contact-us-form.basicform.custom_javascript.js</span>
<span id="y8" class="t" style="left:153.5px;top:367.2px;width:12px;text-align:center;font-size:23px;font-style:italic;font-weight:bold;color:#a5afe8">!</span>
<span id="row8" class="t" style="left:178.48px;top:368.15px;font-size:19.2px;color:#cccccc;font-weight:normal;font-style:normal;font-family:'Liberation Sans', sans-serif;transform:scaleX(1.0281);">simple-contact-us-form.basicform.yml</span>
<svg style="position:absolute;left:99px;top:406px" width="14" height="19" viewBox="-0.6000 0.0000 14.0000 19.0000" ><path d="M2 1.6 L10 9 L2 16.400" fill="none" stroke="#c5c5c5" stroke-width="1.5"/></svg>
<svg style="position:absolute;left:121px;top:403px" width="26" height="25" viewBox="-0.5000 0.0000 26.0000 25.0000" ><path fill="#c5c5c5" d="M2.300 6.300 H9 L10.500 3 H21.900 V6.300 H22.300 V19.700 H2.300 Z"/><path d="M10.900 4.700 H21.100" stroke="#3a3a3a" stroke-width="0.8"/></svg>
<span id="row9" class="t" style="left:154.50px;top:401.15px;font-size:19.2px;color:#cccccc;font-weight:normal;font-style:normal;font-family:'Liberation Sans', sans-serif;transform:scaleX(1.0332);">cloud-flow-consumer</span>
<svg style="position:absolute;left:95px;top:442px" width="20" height="14" viewBox="-0.6000 -0.5000 20.0000 14.0000" ><path d="M1.6 2 L9 9.800 L16.400 2" fill="none" stroke="#c5c5c5" stroke-width="1.5"/></svg>
<svg style="position:absolute;left:121px;top:436px" width="26" height="25" viewBox="-0.5000 0.0000 26.0000 25.0000" ><path fill="#c5c5c5" d="M2.300 6.300 H9 L10.500 3 H21.900 V6.300 H22.300 V19.700 H2.300 Z"/><path d="M10.900 4.700 H21.100" stroke="#3a3a3a" stroke-width="0.8"/></svg>
<span id="row10" class="t" style="left:154.50px;top:434.15px;font-size:19.2px;color:#cccccc;font-weight:normal;font-style:normal;font-family:'Liberation Sans', sans-serif;transform:scaleX(1.0296);">column-permission-profiles</span>
<svg style="position:absolute;left:99px;top:472px" width="14" height="19" viewBox="-0.6000 0.0000 14.0000 19.0000" ><path d="M2 1.6 L10 9 L2 16.400" fill="none" stroke="#c5c5c5" stroke-width="1.5"/></svg>
<svg style="position:absolute;left:121px;top:469px" width="26" height="25" viewBox="-0.5000 0.0000 26.0000 25.0000" ><path fill="#12c4f5" d="M1.400 0 H14.800 V6.200 H20.900 V24 H1.400 Z"/><path fill="#12c4f5" d="M15.900 0.300 L20.700 5.100 H15.900 Z"/><path d="M8.800 10.400 L4.900 13.700 L8.800 17 M13.500 10.400 L17.400 13.700 L13.500 17" fill="none" stroke="#262626" stroke-width="1.700"/></svg>
<span id="row11" class="t" style="left:154.50px;top:467.15px;font-size:19.2px;color:#cccccc;font-weight:normal;font-style:normal;font-family:'Liberation Sans', sans-serif;transform:scaleX(1.0318);">content-snippets</span>
<svg style="position:absolute;left:99px;top:505px" width="14" height="19" viewBox="-0.6000 0.0000 14.0000 19.0000" ><path d="M2 1.6 L10 9 L2 16.400" fill="none" stroke="#c5c5c5" stroke-width="1.5"/></svg>
<svg style="position:absolute;left:121px;top:502px" width="26" height="25" viewBox="-0.5000 0.0000 26.0000 25.0000" ><rect x="0.700" y="0" width="20.800" height="24" rx="1" fill="#58c46b"/><g fill="#262626"><rect x="7.200" y="5.300" width="10.500" height="1.800"/><rect x="7.200" y="10" width="10.500" height="1.800"/><rect x="7.200" y="14.800" width="10.500" height="1.800"/><rect x="4.500" y="5.300" width="1.400" height="1.800"/><rect x="4.500" y="10" width="1.400" height="1.800"/><rect x="4.500" y="14.800" width="1.400" height="1.800"/></g></svg>
<span id="row12" class="t" style="left:153.60px;top:500.15px;font-size:19.2px;color:#cccccc;font-weight:normal;font-style:normal;font-family:'Liberation Sans', sans-serif;transform:scaleX(0.9906);">lists</span>
<svg style="position:absolute;left:99px;top:538px" width="14" height="19" viewBox="-0.6000 0.0000 14.0000 19.0000" ><path d="M2 1.6 L10 9 L2 16.400" fill="none" stroke="#c5c5c5" stroke-width="1.5"/></svg>
<svg style="position:absolute;left:121px;top:535px" width="26" height="25" viewBox="-0.5000 0.0000 26.0000 25.0000" ><path fill="#e8b92f" d="M1.400 0 H14.800 V6.200 H20.900 V24 H1.400 Z"/><path fill="#e8b92f" d="M15.900 0.300 L20.700 5.100 H15.900 Z"/><rect x="10.200" y="9.300" width="13.300" height="14.700" fill="#262626"/><rect x="11.900" y="11" width="10" height="12.200" fill="none" stroke="#e8b92f" stroke-width="1.700" stroke-dasharray="1.700 0.760"/></svg>
<span id="row13" class="t" style="left:153.60px;top:533.15px;font-size:19.2px;color:#cccccc;font-weight:normal;font-style:normal;font-family:'Liberation Sans', sans-serif;transform:scaleX(1.0300);">page-templates</span>
<svg style="position:absolute;left:99px;top:571px" width="14" height="19" viewBox="-0.6000 0.0000 14.0000 19.0000" ><path d="M2 1.6 L10 9 L2 16.400" fill="none" stroke="#c5c5c5" stroke-width="1.5"/></svg>
<svg style="position:absolute;left:121px;top:568px" width="26" height="25" viewBox="-0.5000 0.0000 26.0000 25.0000" ><rect x="-0.600" y="0" width="24.200" height="24" fill="#11c3eb"/><g fill="#262626"><rect x="2.700" y="3.100" width="3.800" height="3.900"/><rect x="3" y="11" width="3.400" height="8.200"/><rect x="10.300" y="4" width="8.700" height="2.200"/></g><path d="M9.500 17 H15.500 Q17.300 17 17.300 15 V10 M12.200 14.300 L9.500 17 L12.200 19.700 M14.600 12.500 L17.300 9.800 L20 12.500" fill="none" stroke="#262626" stroke-width="1.500"/></svg>
<span id="row14" class="t" style="left:153.60px;top:566.15px;font-size:19.2px;color:#cccccc;font-weight:normal;font-style:normal;font-family:'Liberation Sans', sans-serif;transform:scaleX(1.0309);">poll-placements</span>
<svg style="position:absolute;left:99px;top:604px" width="14" height="19" viewBox="-0.6000 0.0000 14.0000 19.0000" ><path d="M2 1.6 L10 9 L2 16.400" fill="none" stroke="#c5c5c5" stroke-width="1.5"/></svg>
<svg style="position:absolute;left:121px;top:601px" width="26" height="25" viewBox="-0.5000 0.0000 26.0000 25.0000" ><rect x="-0.300" y="0" width="1.400" height="22.500" fill="#4a8ff0"/><rect x="1.100" y="1.500" width="16.100" height="4.800" fill="#3b82e8"/><rect x="1.100" y="6.300" width="22.500" height="8.700" fill="#4aa3f5"/><rect x="1.100" y="15" width="13.500" height="6" fill="#3b82e8"/></svg>
<span id="row15" class="t" style="left:153.60px;top:599.15px;font-size:19.2px;color:#cccccc;font-weight:normal;font-style:normal;font-family:'Liberation Sans', sans-serif;transform:scaleX(1.0467);">polls</span>
<svg style="position:absolute;left:99px;top:637px" width="14" height="19" viewBox="-0.6000 0.0000 14.0000 19.0000" ><path d="M2 1.6 L10 9 L2 16.400" fill="none" stroke="#c5c5c5" stroke-width="1.5"/></svg>
<svg style="position:absolute;left:121px;top:634px" width="26" height="25" viewBox="-0.5000 0.0000 26.0000 25.0000" ><path fill="#11c3eb" d="M0.900 0 H13.500 V6 H20.500 V24 H0.900 Z"/><path fill="#11c3eb" d="M14.600 0.500 L19.500 5 H14.600 Z"/><g fill="#262626"><rect x="3.300" y="5.700" width="1" height="1.200"/><rect x="5.500" y="5.700" width="5" height="1.200"/><rect x="3.300" y="8.800" width="1" height="1.200"/><rect x="5.500" y="8.800" width="5" height="1.200"/><rect x="3.300" y="11.900" width="1" height="1.200"/><rect x="5.500" y="11.900" width="5" height="1.200"/></g><path d="M11.600 24 V15 L13.500 14.500 C13.500 8.500 22.500 8.500 22.500 14.500 L23.600 15 V24 Z" fill="#262626"/><rect x="13.800" y="16" width="9.100" height="8" fill="#11c3eb"/><path d="M15.700 16 V14.700 C15.700 11.300 21 11.300 21 14.700 V16" fill="none" stroke="#11c3eb" stroke-width="1.700"/></svg>
<span id="row16" class="t" style="left:154.50px;top:632.15px;font-size:19.2px;color:#cccccc;font-weight:normal;font-style:normal;font-family:'Liberation Sans', sans-serif;transform:scaleX(1.0120);">table-permissions</span>
<svg style="position:absolute;left:99px;top:670px" width="14" height="19" viewBox="-0.6000 0.0000 14.0000 19.0000" ><path d="M2 1.6 L10 9 L2 16.400" fill="none" stroke="#c5c5c5" stroke-width="1.5"/></svg>
<svg style="position:absolute;left:121px;top:667px" width="26" height="25" viewBox="-0.5000 0.0000 26.0000 25.0000" ><path fill="#c5c5c5" d="M2.300 6.300 H9 L10.500 3 H21.900 V6.300 H22.300 V19.700 H2.300 Z"/><path d="M10.900 4.700 H21.100" stroke="#3a3a3a" stroke-width="0.8"/></svg>
<span id="row17" class="t" style="left:154.50px;top:665.15px;font-size:19.2px;color:#cccccc;font-weight:normal;font-style:normal;font-family:'Liberation Sans', sans-serif;transform:scaleX(0.9281);">Test</span>
<svg style="position:absolute;left:99px;top:703px" width="14" height="19" viewBox="-0.6000 0.0000 14.0000 19.0000" ><path d="M2 1.6 L10 9 L2 16.400" fill="none" stroke="#c5c5c5" stroke-width="1.5"/></svg>
<svg style="position:absolute;left:121px;top:700px" width="26" height="25" viewBox="-0.5000 0.0000 26.0000 25.0000" ><path fill="#e5ae52" d="M1.400 0 H14.800 V6.200 H20.900 V24 H1.400 Z"/><path fill="#e5ae52" d="M15.900 0.300 L20.700 5.100 H15.900 Z"/><circle cx="15.900" cy="16.200" r="8.200" fill="#262626"/><g fill="none" stroke="#d99a1e" stroke-width="1"><circle cx="15.900" cy="16.200" r="6.900" stroke-width="1.300"/><ellipse cx="15.900" cy="16.200" rx="3.200" ry="6.800"/><path d="M15.900 9.400 V23 M9.800 13.800 H22 M9.800 18.600 H22"/></g></svg>
<span id="row18" class="t" style="left:155.40px;top:698.15px;font-size:19.2px;color:#cccccc;font-weight:normal;font-style:normal;font-family:'Liberation Sans', sans-serif;transform:scaleX(1.0030);">web-files</span>
<svg style="position:absolute;left:99px;top:736px" width="14" height="19" viewBox="-0.6000 0.0000 14.0000 19.0000" ><path d="M2 1.6 L10 9 L2 16.400" fill="none" stroke="#c5c5c5" stroke-width="1.5"/></svg>
<svg style="position:absolute;left:121px;top:733px" width="26" height="25" viewBox="-0.5000 0.0000 26.0000 25.0000" ><rect x="-0.300" y="1.200" width="18.700" height="15.100" fill="#3a96f5"/><rect x="-0.300" y="1.200" width="18.700" height="2.600" fill="#4aa8f8"/><rect x="-0.300" y="4.300" width="18.700" height="1" fill="#262626"/><rect x="4.700" y="8" width="19.700" height="16" fill="#262626"/><rect x="5.500" y="8.900" width="18.100" height="14.300" fill="#4ba6f7"/><rect x="5.500" y="11.700" width="18.100" height="1" fill="#262626"/></svg>
<span id="row19" class="t" style="left:155.40px;top:731.15px;font-size:19.2px;color:#cccccc;font-weight:normal;font-style:normal;font-family:'Liberation Sans', sans-serif;transform:scaleX(0.9946);">web-pages</span>
<svg style="position:absolute;left:99px;top:769px" width="14" height="19" viewBox="-0.6000 0.0000 14.0000 19.0000" ><path d="M2 1.6 L10 9 L2 16.400" fill="none" stroke="#c5c5c5" stroke-width="1.5"/></svg>
<svg style="position:absolute;left:121px;top:766px" width="26" height="25" viewBox="-0.5000 0.0000 26.0000 25.0000" ><path d="M17 9 V4.300 L13.500 0.800 H0.500 V23 H6" fill="none" stroke="#c5cdf5" stroke-width="1.700" stroke-dasharray="1.600 1.250"/><rect x="6.800" y="9.800" width="16.800" height="13.900" fill="#a9c4fa"/><rect x="6.800" y="12.500" width="16.800" height="1" fill="#262626"/></svg>
<span id="row20" class="t" style="left:155.40px;top:764.15px;font-size:19.2px;color:#cccccc;font-weight:normal;font-style:normal;font-family:'Liberation Sans', sans-serif;transform:scaleX(1.0145);">web-templates</span>
<svg style="position:absolute;left:99px;top:802px" width="14" height="19" viewBox="-0.6000 0.0000 14.0000 19.0000" ><path d="M2 1.6 L10 9 L2 16.400" fill="none" stroke="#c5c5c5" stroke-width="1.5"/></svg>
<svg style="position:absolute;left:121px;top:799px" width="26" height="25" viewBox="-0.5000 0.0000 26.0000 25.0000" ><g fill="none" stroke="#c0b4c4" stroke-width="1.300"><path d="M6.800 3.700 H23.500 M6.800 8.300 H23.500 M6.800 13.700 H23.500 M6.800 18.500 H23.500"/><path d="M3.700 2.300 H1.200 V9.500 H3.700 M3.700 12.700 H1.200 V20.300 H3.700"/></g></svg>
<span id="row21" class="t" style="left:155.40px;top:797.15px;font-size:19.2px;color:#cccccc;font-weight:normal;font-style:normal;font-family:'Liberation Sans', sans-serif;transform:scaleX(0.9938);">weblink-sets</span>
<span id="y22" class="t" style="left:129.5px;top:829.2px;width:12px;text-align:center;font-size:23px;font-style:italic;font-weight:bold;color:#a5afe8">!</span>
<span id="row22" class="t" style="left:154.50px;top:830.15px;font-size:19.2px;color:#cccccc;font-weight:normal;font-style:normal;font-family:'Liberation Sans', sans-serif;transform:scaleX(0.9813);">ad.yml</span>
<span id="y23" class="t" style="left:129.5px;top:862.2px;width:12px;text-align:center;font-size:23px;font-style:italic;font-weight:bold;color:#a5afe8">!</span>
<span id="row23" class="t" style="left:154.50px;top:863.15px;font-size:19.2px;color:#cccccc;font-weight:normal;font-style:normal;font-family:'Liberation Sans', sans-serif;transform:scaleX(1.0077);">adplacement.yml</span>
<span id="y24" class="t" style="left:129.5px;top:895.2px;width:12px;text-align:center;font-size:23px;font-style:italic;font-weight:bold;color:#a5afe8">!</span>
<span id="row24" class="t" style="left:153.60px;top:896.15px;font-size:19.2px;color:#cccccc;font-weight:normal;font-style:normal;font-family:'Liberation Sans', sans-serif;transform:scaleX(1.0244);">publishingstate.yml</span>
<span id="y25" class="t" style="left:129.5px;top:928.2px;width:12px;text-align:center;font-size:23px;font-style:italic;font-weight:bold;color:#a5afe8">!</span>
<span id="row25" class="t" style="left:154.50px;top:929.15px;font-size:19.2px;color:#cccccc;font-weight:normal;font-style:normal;font-family:'Liberation Sans', sans-serif;transform:scaleX(1.0106);">sitemarker.yml</span>
<span id="y26" class="t" style="left:129.5px;top:961.2px;width:12px;text-align:center;font-size:23px;font-style:italic;font-weight:bold;color:#a5afe8">!</span>
<span id="row26" class="t" style="left:154.50px;top:962.15px;font-size:19.2px;color:#cccccc;font-weight:normal;font-style:normal;font-family:'Liberation Sans', sans-serif;transform:scaleX(1.0149);">sitesetting.yml</span>
<span id="y27" class="t" style="left:129.5px;top:994.2px;width:12px;text-align:center;font-size:23px;font-style:italic;font-weight:bold;color:#a5afe8">!</span>
<span id="row27" class="t" style="left:154.50px;top:995.15px;font-size:19.2px;color:#cccccc;font-weight:normal;font-style:normal;font-family:'Liberation Sans', sans-serif;transform:scaleX(1.0066);">tag.yml</span>
<span id="y28" class="t" style="left:129.5px;top:1027.2px;width:12px;text-align:center;font-size:23px;font-style:italic;font-weight:bold;color:#a5afe8">!</span>
<span id="row28" class="t" style="left:153.60px;top:1028.15px;font-size:19.2px;color:#cccccc;font-weight:normal;font-style:normal;font-family:'Liberation Sans', sans-serif;transform:scaleX(1.0504);">urlhistory.yml</span>
<div style="position:absolute;left:70px;top:1058px;width:683px;height:1px;background:#3c3c3c;"></div>
<div style="position:absolute;left:70px;top:1091px;width:683px;height:1px;background:#3c3c3c;"></div>
<svg style="position:absolute;left:79px;top:1066px" width="14" height="20" viewBox="-0.3000 -0.3000 14.0000 20.0000" ><path d="M2 1.6 L10 9 L2 16.400" fill="none" stroke="#c5c5c5" stroke-width="1.5"/></svg>
<svg style="position:absolute;left:79px;top:1099px" width="14" height="20" viewBox="-0.3000 -0.3000 14.0000 20.0000" ><path d="M2 1.6 L10 9 L2 16.400" fill="none" stroke="#c5c5c5" stroke-width="1.5"/></svg>
<span id="outline" class="t" style="left:100.96px;top:1060.58px;font-size:16.5px;color:#cccccc;font-weight:bold;font-style:normal;font-family:'Liberation Sans', sans-serif;transform:scaleX(0.9558);">OUTLINE</span>
<span id="timeline" class="t" style="left:100.96px;top:1093.58px;font-size:16.5px;color:#cccccc;font-weight:bold;font-style:normal;font-family:'Liberation Sans', sans-serif;transform:scaleX(0.9635);">TIMELINE</span>
<span id="jstab" class="t" style="left:774.00px;top:60.66px;font-size:16px;color:#e5b733;font-weight:bold;font-style:normal;font-family:'Liberation Sans', sans-serif;transform:scaleX(0.7766);-webkit-text-stroke:0.350px #e5b733;">JS</span>
<span id="tab" class="t" style="left:800.98px;top:61.65px;font-size:19.2px;color:#ffffff;font-weight:normal;font-style:normal;font-family:'Liberation Sans', sans-serif;transform:scaleX(1.0060);">simple-contact-us-form.basicform.custom_javascript.js</span>
<svg style="position:absolute;left:1280px;top:69px" width="16" height="16" viewBox="0.0000 0.0000 16.0000 16.0000" ><path d="M0.8 0.8 L14.200 14.200 M14.200 0.8 L0.8 14.200" stroke="#ffffff" stroke-width="1.500" fill="none"/></svg>
<svg style="position:absolute;left:1899px;top:63px" width="23" height="23" viewBox="0.0000 0.0000 23.0000 23.0000" ><rect x="1.300" y="1.700" width="19.200" height="18.700" rx="2" fill="none" stroke="#d0d0d0" stroke-width="1.600"/><path d="M10.800 1.700 V20.400" stroke="#d0d0d0" stroke-width="1.600"/></svg>
<svg style="position:absolute;left:1936px;top:70px" width="25" height="10" viewBox="-0.5000 -0.9000 25.0000 10.0000" ><circle cx="4.00" cy="4" r="1.9" fill="#d4d4d4"/><circle cx="11.60" cy="4" r="1.9" fill="#d4d4d4"/><circle cx="19.10" cy="4" r="1.9" fill="#d4d4d4"/></svg>
<span id="bc1" class="t" style="left:776.10px;top:104.15px;font-size:19.2px;color:#a9a9a9;font-weight:normal;font-style:normal;font-family:'Liberation Sans', sans-serif;transform:scaleX(1.0203);">basic-forms</span>
<span id="bc2" class="t" style="left:901.00px;top:104.15px;font-size:19.2px;color:#a9a9a9;font-weight:normal;font-style:normal;font-family:'Liberation Sans', sans-serif;transform:scaleX(1.0412);">simple-contact-us-form</span>
<span id="bc3" class="t" style="left:1162.50px;top:104.15px;font-size:19.2px;color:#a9a9a9;font-weight:normal;font-style:normal;font-family:'Liberation Sans', sans-serif;transform:scaleX(1.0079);">simple-contact-us-form.basicform.custom_javascript.js</span>
<svg style="position:absolute;left:885px;top:110px" width="11" height="19" viewBox="0.0000 -0.5000 11.0000 19.0000" ><path d="M1 1.200 L8.600 8.500 L1 15.800" fill="none" stroke="#a9a9a9" stroke-width="1.500"/></svg>
<svg style="position:absolute;left:1112px;top:110px" width="12" height="19" viewBox="-0.8000 -0.5000 12.0000 19.0000" ><path d="M1 1.200 L8.600 8.500 L1 15.800" fill="none" stroke="#a9a9a9" stroke-width="1.500"/></svg>
<span id="jsbc" class="t" style="left:1135.00px;top:103.16px;font-size:16px;color:#e5b733;font-weight:bold;font-style:normal;font-family:'Liberation Sans', sans-serif;transform:scaleX(0.7766);-webkit-text-stroke:0.350px #e5b733;">JS</span>
<div style="position:absolute;left:855px;top:134px;width:1008px;height:29px;background:#1e1e1e;border:3px solid #282828;border-right:none;box-sizing:border-box"></div>
<span id="ln" class="t" style="left:804.50px;top:134.87px;font-size:19.25px;color:#c6c6c6;font-style:normal;font-weight:normal;font-family:'Liberation Mono', monospace;-webkit-text-stroke:0.300px #c6c6c6">1</span>
<span id="g1" class="t" style="left:861.00px;top:134.87px;font-size:19.25px;color:#3794ff;font-style:italic;font-weight:normal;font-family:'Liberation Mono', monospace;-webkit-text-stroke:0.300px #3794ff">Press</span>
<span id="g2" class="t" style="left:1039.40px;top:134.87px;font-size:19.25px;color:#3794ff;font-style:italic;font-weight:normal;font-family:'Liberation Mono', monospace;-webkit-text-stroke:0.300px #3794ff">to ask GitHub Copilot to do something.</span>
<span id="g3" class="t" style="left:1489.00px;top:134.87px;font-size:19.25px;color:#a0a0a0;font-style:italic;font-weight:normal;font-family:'Liberation Mono', monospace;-webkit-text-stroke:0.300px #a0a0a0">Start typing to dismiss.</span>
<div style="position:absolute;left:930px;top:137px;width:54px;height:26px;background:transparent;border:1px solid #9a9a9a;border-radius:5px;box-sizing:border-box"></div>
<div style="position:absolute;left:1001px;top:137px;width:26px;height:26px;background:transparent;border:1px solid #9a9a9a;border-radius:5px;box-sizing:border-box"></div>
<span id="k1" class="t" style="left:938.80px;top:135.95px;font-size:15.2px;color:#cccccc;font-style:normal;font-weight:normal;font-family:'Liberation Mono', monospace;-webkit-text-stroke:0.300px #cccccc">Ctrl</span>
<span id="k2" class="t" style="left:1010.00px;top:135.95px;font-size:15.2px;color:#cccccc;font-style:normal;font-weight:normal;font-family:'Liberation Mono', monospace;-webkit-text-stroke:0.300px #cccccc">I</span>
<span id="kp" class="t" style="left:986.50px;top:134.87px;font-size:19.25px;color:#cccccc;font-style:normal;font-weight:normal;font-family:'Liberation Mono', monospace;-webkit-text-stroke:0.300px #cccccc">+</span>
<div style="position:absolute;left:1963px;top:137px;width:1px;height:987px;background:#303030;"></div>
<div style="position:absolute;left:1963px;top:134px;width:11px;height:3px;background:#a6a6a6;"></div>
<svg style="position:absolute;left:1023px;top:318px" width="17" height="28" viewBox="0.0000 0.0000 17.0000 28.0000" ><path d="M1 2 H6.500 L8 3 L9.500 2 H15 M1 25 H6.500 L8 24 L9.500 25 H15 M8 3 V24" fill="none" stroke="#1a1a1a" stroke-width="4"/><path d="M1 2 H6.500 L8 3 L9.500 2 H15 M1 25 H6.500 L8 24 L9.500 25 H15 M8 3 V24" fill="none" stroke="#f4f4f8" stroke-width="2"/></svg>
<svg style="position:absolute;left:16px;top:1131px" width="16" height="19" viewBox="0.0000 0.0000 16.0000 19.0000" ><path d="M0.600 6.600 L6.500 12 L0.900 17.700 M13.800 1 L8.300 6.200 L13.800 11.400" fill="none" stroke="#ffffff" stroke-width="1.500"/></svg>
<svg style="position:absolute;left:62px;top:1130px" width="20" height="21" viewBox="0.0000 -0.6000 20.0000 21.0000" ><circle cx="9.500" cy="9.800" r="8.500" fill="none" stroke="#ffffff" stroke-width="1.700"/><path d="M5.800 6.100 L13.200 13.500 M13.200 6.100 L5.800 13.500" stroke="#ffffff" stroke-width="1.700" fill="none"/></svg>
<span id="s_e" class="t" style="left:87.98px;top:1125.54px;font-size:17.5px;color:#ffffff;font-weight:normal;font-style:normal;font-family:'Liberation Sans', sans-serif;transform:scaleX(0.8848);-webkit-text-stroke:0.250px #fff;">0</span>
<svg style="position:absolute;left:103px;top:1130px" width="20" height="20" viewBox="0.0000 -0.3000 20.0000 20.0000" ><path d="M9.500 1.500 L18 17.500 H1 Z" fill="none" stroke="#ffffff" stroke-width="1.700" stroke-linejoin="round"/><path d="M9.500 7 V12.500 M9.500 14 V16" stroke="#ffffff" stroke-width="2.100"/></svg>
<span id="s_w" class="t" style="left:128.48px;top:1125.54px;font-size:17.5px;color:#ffffff;font-weight:normal;font-style:normal;font-family:'Liberation Sans', sans-serif;transform:scaleX(0.8291);-webkit-text-stroke:0.250px #fff;">0</span>
<svg style="position:absolute;left:163px;top:1130px" width="21" height="21" viewBox="-0.4737 -0.2842 19.8947 19.8947" ><g fill="none" stroke="#ffffff" stroke-width="1.500"><path d="M4.300 1 C0.500 4.800 0.500 10 4.300 13.800 M13.700 1 C17.500 4.800 17.500 10 13.700 13.800 M6.700 3.600 C4.400 6 4.400 9 6.700 11.300 M11.300 3.600 C13.600 6 13.600 9 11.300 11.300"/><path d="M9 7.500 L4.800 18.500 M9 7.500 L13.200 18.500 M6.300 14.500 H11.700"/></g><circle cx="9" cy="7.300" r="1.900" fill="none" stroke="#ffffff" stroke-width="1.300"/></svg>
<span id="s_p" class="t" style="left:187.98px;top:1125.54px;font-size:17.5px;color:#ffffff;font-weight:normal;font-style:normal;font-family:'Liberation Sans', sans-serif;transform:scaleX(0.8848);-webkit-text-stroke:0.250px #fff;">0</span>
<span id="s_ln" class="t" style="left:1428.58px;top:1125.54px;font-size:17.5px;color:#ffffff;font-weight:normal;font-style:normal;font-family:'Liberation Sans', sans-serif;transform:scaleX(0.9697);-webkit-text-stroke:0.250px #fff;">Ln 1, Col 1</span>
<span id="s_sp" class="t" style="left:1536.00px;top:1125.54px;font-size:17.5px;color:#ffffff;font-weight:normal;font-style:normal;font-family:'Liberation Sans', sans-serif;transform:scaleX(0.9302);-webkit-text-stroke:0.250px #fff;">Spaces: 4</span>
<span id="s_utf" class="t" style="left:1632.58px;top:1125.54px;font-size:17.5px;color:#ffffff;font-weight:normal;font-style:normal;font-family:'Liberation Sans', sans-serif;transform:scaleX(0.9619);-webkit-text-stroke:0.250px #fff;">UTF-8</span>
<span id="s_crlf" class="t" style="left:1704.52px;top:1125.54px;font-size:17.5px;color:#ffffff;font-weight:normal;font-style:normal;font-family:'Liberation Sans', sans-serif;transform:scaleX(0.8379);-webkit-text-stroke:0.250px #fff;">CRLF</span>
<span id="s_br1" class="t" style="left:1767.00px;top:1125.54px;font-size:17.5px;color:#ffffff;font-weight:normal;font-style:normal;font-family:'Liberation Sans', sans-serif;transform:scaleX(0.8001);-webkit-text-stroke:0.250px #fff;">{</span>
<span id="s_br2" class="t" style="left:1777.80px;top:1125.54px;font-size:17.5px;color:#ffffff;font-weight:normal;font-style:normal;font-family:'Liberation Sans', sans-serif;transform:scaleX(0.7880);-webkit-text-stroke:0.250px #fff;">}</span>
<span id="s_js" class="t" style="left:1795.00px;top:1125.54px;font-size:17.5px;color:#ffffff;font-weight:normal;font-style:normal;font-family:'Liberation Sans', sans-serif;transform:scaleX(0.9377);-webkit-text-stroke:0.250px #fff;">JavaScript</span>
<svg style="position:absolute;left:1893px;top:1130px" width="24" height="21" viewBox="0.0000 0.0000 24.0000 21.0000" ><g fill="none" stroke="#ffffff" stroke-width="2.300"><rect x="4.300" y="3.200" width="6.500" height="7.300" rx="3"/><rect x="13.200" y="3.200" width="6.500" height="7.300" rx="3"/><path d="M4.200 10.500 C1.500 12.500 1.800 16.500 2.500 18 C5 20.500 8 21.500 12 21.500 C16 21.500 19 20.500 21.500 18 C22.200 16.500 22.500 12.500 19.800 10.500"/></g><rect x="8.100" y="13" width="2.500" height="3.900" fill="#ffffff"/><rect x="13.100" y="13" width="2.500" height="3.900" fill="#ffffff"/></svg>
<svg style="position:absolute;left:1941px;top:1130px" width="19" height="21" viewBox="0.0000 0.0000 19.0000 21.0000" ><path d="M1.400 16.100 L3.500 12.500 V8.500 C3.500 -1.500 13.700 -1.500 13.700 8.500 V12.500 L15.800 16.100 Z" fill="none" stroke="#ffffff" stroke-width="1.500" stroke-linejoin="round"/><path d="M6.300 16.500 Q8.600 21 10.900 16.500" fill="none" stroke="#ffffff" stroke-width="1.500"/></svg>
</div></body></html>
